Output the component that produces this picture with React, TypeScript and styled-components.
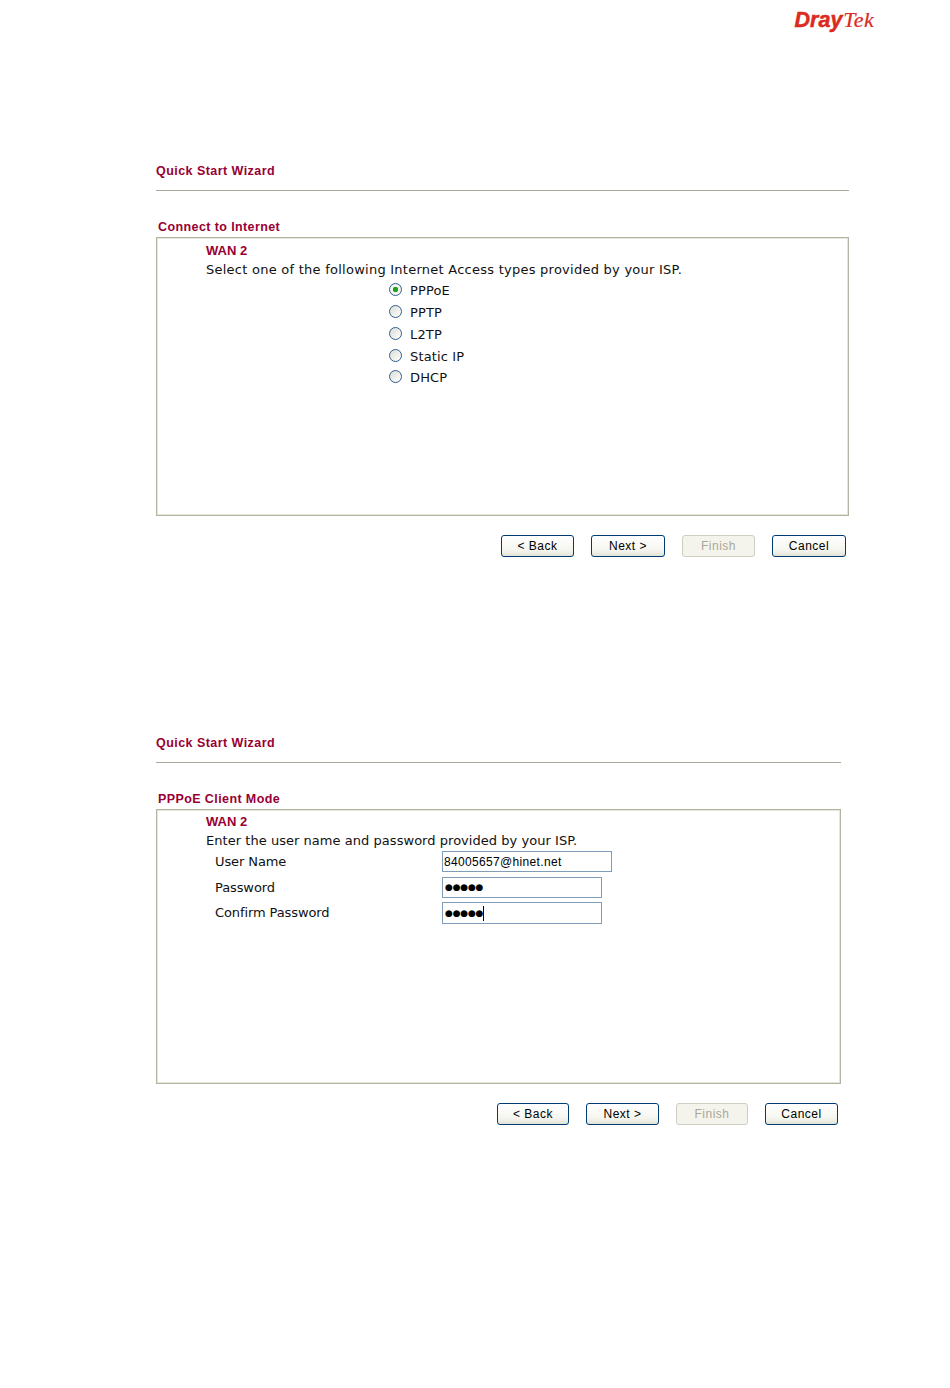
import React from "react";
import styled, { createGlobalStyle } from "styled-components";

const GlobalStyle = createGlobalStyle`
  html, body {
    margin: 0;
    padding: 0;
    background: #ffffff;
  }
  body {
    font-family: "DejaVu Sans", Verdana, sans-serif;
  }
`;

const Page = styled.div`
  width: 950px;
  height: 1388px;
  overflow: hidden;
  padding-left: 156px;
  box-sizing: border-box;
`;

const LogoRow = styled.div`
  display: flex;
  justify-content: flex-end;
  width: 718px;
  height: 33px;
  padding-top: 8px;
  box-sizing: border-box;
  color: #dc2a1e;
  line-height: 24px;
`;

const LogoBold = styled.span`
  font-family: "Liberation Sans", Arial, sans-serif;
  font-size: 21.5px;
  font-weight: bold;
  font-style: italic;
  -webkit-text-stroke: 0.5px #dc2a1e;
`;

const LogoLight = styled.span`
  font-family: "Liberation Serif", "Times New Roman", serif;
  font-size: 22px;
  font-style: italic;
  margin-left: 1px;
  letter-spacing: 0.3px;
  -webkit-text-stroke: 0.2px #dc2a1e;
`;

const Wizard = styled.section<{ $width: number; $top: number }>`
  width: ${(p) => p.$width}px;
  margin-top: ${(p) => p.$top}px;
`;

const Title = styled.h1`
  margin: 0;
  height: 17px;
  font-family: "Liberation Sans", Arial, sans-serif;
  font-size: 12.5px;
  line-height: 17px;
  font-weight: bold;
  letter-spacing: 0.45px;
  color: #990033;
`;

const Rule = styled.hr`
  margin: 10px 0 0;
  border: none;
  border-top: 1px solid #aaa99a;
`;

const Legend = styled.h2`
  margin: 27px 0 0 2px;
  height: 19px;
  font-family: "Liberation Sans", Arial, sans-serif;
  font-size: 12.5px;
  line-height: 19px;
  font-weight: bold;
  letter-spacing: 0.4px;
  color: #990033;
`;

const Panel = styled.div<{ $height: number; $padTop: number }>`
  height: ${(p) => p.$height}px;
  box-sizing: border-box;
  border: 1px solid #b4b3a4;
  box-shadow: inset 0 0 0 1px #e6e5da;
  padding: ${(p) => p.$padTop}px 0 0 49px;
`;

const WanTitle = styled.div`
  height: 16px;
  font-family: "Liberation Sans", Arial, sans-serif;
  font-size: 13px;
  line-height: 16px;
  font-weight: bold;
  color: #990033;
`;

const Intro = styled.p<{ $tracking: number }>`
  margin: 2px 0 0;
  font-size: 13px;
  line-height: 18px;
  color: #111111;
  letter-spacing: ${(p) => p.$tracking}px;
`;

const RadioList = styled.div`
  display: flex;
  flex-direction: column;
  gap: 6px;
  margin: 4px 0 0 183px;
`;

const RadioRow = styled.div`
  display: flex;
  align-items: flex-start;
  gap: 8px;
  height: 16px;
  font-size: 13px;
  line-height: 16px;
  letter-spacing: 0.15px;
  color: #111111;

  &:last-child {
    margin-top: -1px;
  }
`;

const RadioMark = styled.span<{ $on?: boolean }>`
  flex: none;
  width: 13px;
  height: 13px;
  box-sizing: border-box;
  border: 1px solid #2f5f8c;
  border-radius: 50%;
  background: ${(p) =>
    p.$on
      ? "radial-gradient(circle, #21a121 0 2.5px, #f4f4ee 3px)"
      : "linear-gradient(135deg, #dcdcd4, #ffffff)"};
`;

const FieldGrid = styled.div`
  display: grid;
  grid-template-columns: 227px 1fr;
  grid-auto-rows: 21px;
  row-gap: 4.5px;
  margin: 1px 0 0 9px;
  align-items: start;
`;

const FieldLabel = styled.label`
  padding-top: 3px;
  font-size: 13px;
  line-height: 16px;
  letter-spacing: -0.1px;
  color: #111111;
`;

const Field = styled.div<{ $width: number; $height?: number }>`
  display: flex;
  align-items: center;
  width: ${(p) => p.$width}px;
  height: ${(p) => p.$height ?? 21}px;
  box-sizing: border-box;
  border: 1px solid #7f9db9;
  padding-left: 1px;
  font-family: "Liberation Sans", Arial, sans-serif;
  font-size: 12px;
  letter-spacing: 0.33px;
  color: #000000;
  white-space: nowrap;
`;

const Dots = styled.span`
  margin-left: 1px;
  font-family: "DejaVu Sans", sans-serif;
  font-size: 9px;
  letter-spacing: -0.2px;
`;

const Caret = styled.span`
  width: 1px;
  height: 15px;
  background: #000000;
`;

const ButtonRow = styled.div<{ $narrow: number }>`
  display: flex;
  justify-content: flex-end;
  gap: 17px;
  margin-top: 19px;
  padding-right: 3px;

  & > button {
    width: ${(p) => p.$narrow}px;
  }
  & > button:nth-child(even) {
    width: ${(p) => p.$narrow + 1}px;
  }
`;

const WizardButton = styled.button`
  height: 22px;
  padding: 0;
  box-sizing: border-box;
  border: 1px solid #003c74;
  border-radius: 3px;
  background: linear-gradient(180deg, #ffffff 0%, #f6f6f0 70%, #e3e2d8 100%);
  font-family: "Liberation Sans", Arial, sans-serif;
  font-size: 12px;
  letter-spacing: 0.5px;
  color: #000000;

  &:disabled {
    border-color: #cfcec2;
    background: #f4f4ec;
    color: #a9a897;
  }
`;

const accessTypes = ["PPPoE", "PPTP", "L2TP", "Static IP", "DHCP"];

function Buttons({ narrow }: { narrow: number }) {
  return (
    <ButtonRow $narrow={narrow}>
      <WizardButton>&lt; Back</WizardButton>
      <WizardButton>Next &gt;</WizardButton>
      <WizardButton disabled>Finish</WizardButton>
      <WizardButton>Cancel</WizardButton>
    </ButtonRow>
  );
}

export default function App() {
  return (
    <Page>
      <GlobalStyle />
      <LogoRow>
        <LogoBold>Dray</LogoBold>
        <LogoLight>Tek</LogoLight>
      </LogoRow>

      <Wizard $width={693} $top={130}>
        <Title>Quick Start Wizard</Title>
        <Rule />
        <Legend>Connect to Internet</Legend>
        <Panel $height={279} $padTop={5}>
          <WanTitle>WAN 2</WanTitle>
          <Intro $tracking={0.25}>
            Select one of the following Internet Access types provided by your ISP.
          </Intro>
          <RadioList>
            {accessTypes.map((name, i) => (
              <RadioRow key={name}>
                <RadioMark $on={i === 0} />
                {name}
              </RadioRow>
            ))}
          </RadioList>
        </Panel>
        <Buttons narrow={73} />
      </Wizard>

      <Wizard $width={685} $top={178}>
        <Title>Quick Start Wizard</Title>
        <Rule />
        <Legend>PPPoE Client Mode</Legend>
        <Panel $height={275} $padTop={4}>
          <WanTitle>WAN 2</WanTitle>
          <Intro $tracking={0.04}>Enter the user name and password provided by your ISP.</Intro>
          <FieldGrid>
            <FieldLabel>User Name</FieldLabel>
            <Field $width={170}>84005657@hinet.net</Field>
            <FieldLabel>Password</FieldLabel>
            <Field $width={160}>
              <Dots>●●●●●</Dots>
            </Field>
            <FieldLabel>Confirm Password</FieldLabel>
            <Field $width={160} $height={22}>
              <Dots>●●●●●</Dots>
              <Caret />
            </Field>
          </FieldGrid>
        </Panel>
        <Buttons narrow={72} />
      </Wizard>
    </Page>
  );
}
